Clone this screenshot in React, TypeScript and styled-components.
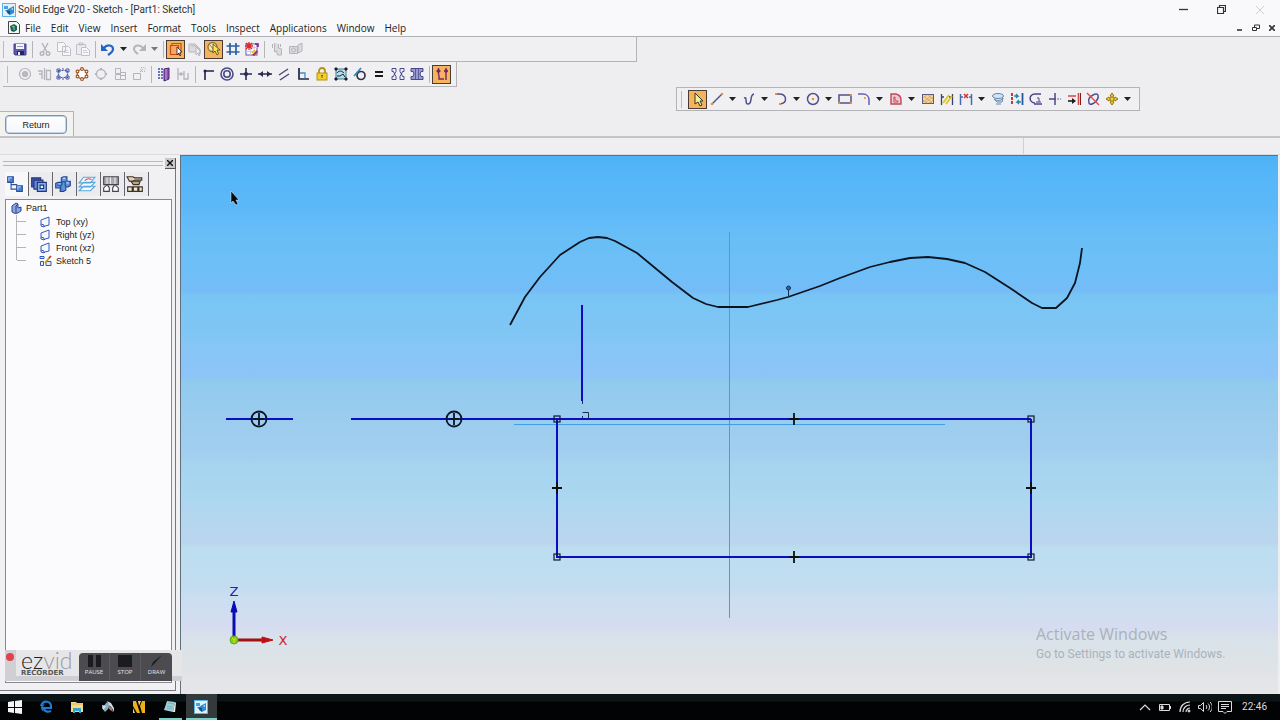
import React from "react";
import styled, { createGlobalStyle } from "styled-components";

const GlobalStyle = createGlobalStyle`
  * { box-sizing: border-box; }
  html, body { margin: 0; padding: 0; }
  body { background: #eeeef1; font-family: "Noto Sans", "Liberation Sans", sans-serif; color: #222; }
  button { font: inherit; color: inherit; }
`;

/* ---------- icons ---------- */

const GRAY = "#b4b4ba";
const ORANGE = "#e8903a";

const toolIcons: Record<string, React.ReactNode> = {
  save: (
    <g>
      <path d="M2 3h12v11H3l-1-1z" fill="#5a5ab0" stroke="#44448c" />
      <rect x="4" y="3" width="8" height="5" fill="#f4f4fa" />
      <path d="M5 5.500h6" stroke="#9a9ac8" />
      <rect x="5" y="10" width="7" height="4" fill="#26265c" />
      <rect x="6" y="11" width="2" height="3" fill="#eee" />
    </g>
  ),
  cut: (
    <g fill="none" stroke={GRAY} strokeWidth="1.4">
      <path d="M5 2l5 9M11 2L6 11" />
      <circle cx="5" cy="12.5" r="1.8" />
      <circle cx="11" cy="12.5" r="1.8" />
    </g>
  ),
  copy: (
    <g fill="#f6f6f8" stroke="#c0c0c8">
      <path d="M1.500 1.500h6l2 2v7h-8zM6.500 5.500h6l2 2v7h-8z" />
      <path d="M8 9.500h4M8 11.500h5" stroke="#ccccdd" />
    </g>
  ),
  paste: (
    <g fill="#ececf0" stroke="#c0c0c8">
      <path d="M1.500 3.500h9v10h-9zM4 2h4v2H4z" />
      <path d="M6.500 6.500h5l3 3v5h-8z" fill="#f8f8fa" />
      <path d="M8 9.500h4M8 11.500h5" stroke="#ccccdd" />
    </g>
  ),
  undo: (
    <g fill="none" stroke="#2563c4" strokeWidth="2.200">
      <path d="M4 7c3-4 9-3 9 1 0 3-2 4-5 6" />
      <path d="M1 3v7h7z" fill="#2563c4" stroke="none" />
    </g>
  ),
  redo: (
    <g fill="none" stroke={GRAY} strokeWidth="2">
      <path d="M12 7c-3-4-9-3-9 1 0 3 2 3 4 5" />
      <path d="M15 3v7H8z" fill={GRAY} stroke="none" />
    </g>
  ),
  part: (
    <g>
      <path d="M2.500 4.500h8v9h-8z" fill="#f4a860" stroke="#c84820" strokeWidth="1.200" />
      <path d="M4 4V2.500h9V10" fill="none" stroke="#c84820" strokeWidth="1.200" />
      <path d="M9 6v8l2-2 1 3 1-1-1-3h2z" fill="#fff" stroke="#222" strokeWidth=".8" />
    </g>
  ),
  partGray: (
    <g fill="#dcdce0" stroke={GRAY}>
      <path d="M2 3h6l3 3v5H2zM4 5h6l3 3v5" />
      <path d="M9 6v8l2-2 1 3 1-1-1-3h2z" fill="#f4f4f6" />
    </g>
  ),
  selectTool: (
    <g>
      <circle cx="6.500" cy="6" r="4.500" fill="#f8e8a0" stroke="#8a7440" strokeWidth="1.300" />
      <path d="M3 3l6 7" stroke="#e06030" />
      <path d="M7 3v9l2-2 2 4 1.500-1L11 9h3z" fill="#f6e94a" stroke="#444" strokeWidth=".8" />
    </g>
  ),
  grid: <path d="M5 2v12M11 2v12M1.500 5h13M1.500 11h13" stroke="#2a5fa8" strokeWidth="1.700" />,
  sheet: (
    <g>
      <rect x="2" y="3" width="11" height="11" fill="#fff" stroke="#7070c0" strokeWidth="1.200" />
      <path d="M2 6.500h11M6.500 3v11M10 3v11M2 10.500h11" stroke="#c8c8ea" />
      <path d="M2 2l6 6M8 2L2 8M1 5h8M5 1v8" stroke="#e02828" strokeWidth="1.300" />
      <path d="M11 3h3v3" stroke="#7a2090" strokeWidth="1.600" fill="none" />
      <path d="M8 14l5-5 1 2-4 4z" fill="#b03050" />
      <path d="M8 12l3-3" stroke="#e8c020" strokeWidth="1.600" />
    </g>
  ),
  touch: (
    <path d="M5.500 2v9l2-1 1 4h4V8l-3-1V3M3.500 3v4M11.500 3v3" fill="#dcdce0" stroke={GRAY} />
  ),
  camera: (
    <g fill="#dcdce0" stroke={GRAY}>
      <path d="M1.500 5.500h8v7h-8zM10 4l4-2v8l-4 2z" />
      <circle cx="5.500" cy="9" r="2" />
    </g>
  ),
  target: (
    <g fill="none" stroke={GRAY} strokeWidth="1.200">
      <circle cx="8" cy="8" r="5.500" />
      <circle cx="8" cy="8" r="2.500" fill="#bbb" />
    </g>
  ),
  mirrorGray: (
    <path d="M2 5h4v3H3M6 5v8M8.500 2v12M10.500 4.500h4v9h-4z" fill="none" stroke={GRAY} strokeWidth="1.300" />
  ),
  pattern: (
    <g fill="none" stroke="#4858a8" strokeWidth="1.200">
      <path d="M3.500 4.500h9v7h-9z" strokeDasharray="2 1" />
      <path d="M2 3h3v3H2zM11 3h3v3h-3zM2 10h3v3H2zM11 10h3v3h-3zM7 3h2M7 13h2" strokeWidth="1" />
    </g>
  ),
  circlePattern: (
    <g fill="#fff" stroke="#9a5020" strokeWidth="1.100">
      <circle cx="8" cy="8" r="4.800" />
      <circle cx="8" cy="3" r="1.400" />
      <circle cx="8" cy="13" r="1.400" />
      <circle cx="3.500" cy="5.500" r="1.400" />
      <circle cx="12.500" cy="5.500" r="1.400" />
      <circle cx="3.500" cy="10.500" r="1.400" />
      <circle cx="12.500" cy="10.500" r="1.400" />
    </g>
  ),
  diamond: (
    <g fill="none" stroke={GRAY} strokeWidth="1.300">
      <circle cx="8" cy="8" r="4.500" />
      <path d="M8 2v2M8 12v2M2 8h2M12 8h2" strokeWidth="2" />
    </g>
  ),
  blocks: (
    <path d="M3.500 2.500h5v5h-5zM3.500 8.500h5v5h-5zM8.500 6.500h5v7h-5zM8.500 9.500h5" fill="none" stroke={GRAY} />
  ),
  scale: (
    <g fill="none" stroke={GRAY}>
      <path d="M2.500 7.500h7v6h-7zM9 6l3-3" />
      <rect x="10" y="1.500" width="4" height="4" strokeDasharray="1 1" />
    </g>
  ),
  book: (
    <g>
      <path d="M2 3h5M2 6h5M2 9h5M2 12h5M3 2v12M6 2v12" stroke="#3a4ab0" strokeDasharray="2 1" />
      <path d="M8 3l5-1v11l-5 2z" fill="#8c4faa" stroke="#4a2470" />
      <path d="M10 3v11" stroke="#c8a0e0" />
    </g>
  ),
  tree: <path d="M3 2v12M3 8h6M9 5v8h4V7M6 6v4" fill="none" stroke={GRAY} strokeWidth="1.300" />,
  connect: (
    <g>
      <path d="M5 14V5h9" fill="none" stroke="#222246" strokeWidth="1.600" />
      <circle cx="5" cy="5" r="1.500" fill="#222246" />
    </g>
  ),
  concentric: (
    <g fill="none" stroke="#4a4a86" strokeWidth="1.600">
      <circle cx="8" cy="8" r="6" />
      <circle cx="8" cy="8" r="3.200" />
    </g>
  ),
  plus: (
    <g>
      <path d="M8 2v12M2 8h12" stroke="#2a2a50" strokeWidth="1.600" />
      <circle cx="8" cy="8" r="2" fill="#2a2a50" />
    </g>
  ),
  horizontal: (
    <g fill="#2a2a50">
      <path d="M1 8h14" stroke="#2a2a50" strokeWidth="1.500" />
      <path d="M2 8l4-3v6zM14 8l-4-3v6z" />
    </g>
  ),
  parallel: <path d="M3 9l9-6M4 14l9-6" stroke="#4a4a7c" strokeWidth="1.500" />,
  perpendicular: (
    <g fill="none">
      <path d="M4 2v11h10" stroke="#23234c" strokeWidth="1.700" />
      <path d="M5 7h5v5" stroke="#3f8fc0" strokeWidth="1.300" />
    </g>
  ),
  lock: (
    <g>
      <path d="M5 8V5a3 3 0 016 0v3" fill="none" stroke="#b89010" strokeWidth="1.800" />
      <rect x="3" y="7" width="10" height="7" fill="#f2cf2a" stroke="#b89010" />
      <path d="M8 9v3M7 9.500h2" stroke="#7a5c08" />
    </g>
  ),
  rigid: (
    <g>
      <rect x="3" y="3" width="10" height="10" fill="#b8dcec" stroke="#3a8090" />
      <path d="M4 7c2-3 5-2 7 0M4 10h3l3-2 2 3" fill="none" stroke="#222" />
      <path d="M2 2h2v2H2zM12 2h2v2h-2zM2 12h2v2H2zM12 12h2v2h-2z" fill="#1c1c2c" stroke="#1c1c2c" />
    </g>
  ),
  tangent: (
    <g fill="none">
      <circle cx="9" cy="9.500" r="4" stroke="#333348" strokeWidth="1.700" />
      <path d="M2 10L9 2" stroke="#2f88b8" strokeWidth="1.700" />
    </g>
  ),
  equal: <path d="M4 6h8M4 10h8" stroke="#1a1a1a" strokeWidth="2" />,
  symmetric: (
    <path
      d="M2 2.500h4v3L4.500 8 6 10.500v3H2v-3h1.500l1-2.500-1-2.500H2zM14 2.500h-4v3L11.500 8 10 10.500v3h4v-3h-1.500l-1-2.500 1-2.500H14z"
      fill="#f0f0fc"
      stroke="#48488a"
    />
  ),
  symmetricFill: (
    <g>
      <path d="M2 2.500h12v3h-2L11 8l1 2.500h2v3H2v-3h2L5 8 4 5.500H2z" fill="#9a9ad0" stroke="#48488a" />
      <path d="M6.500 3v10M9.500 3v10" stroke="#5c5ca0" />
    </g>
  ),
  relations: (
    <g stroke="#7a2468" strokeWidth="1.400" fill="none">
      <path d="M4.500 2v7M12 2v12M2.500 5h4M10 5h4M5 9v4h5" />
      <circle cx="4.500" cy="5" r="1" />
      <circle cx="12" cy="5" r="1" />
    </g>
  ),
  pointer: <path d="M5 2v11l3-2 2 4 2-1-2-4h3z" fill="#f6ef90" stroke="#333" />,
  line: (
    <g>
      <path d="M3 13L13 3" stroke="#50508e" strokeWidth="1.400" />
      <circle cx="3" cy="13" r="1.300" fill={ORANGE} />
      <circle cx="13" cy="3" r="1.300" fill={ORANGE} />
    </g>
  ),
  curve: (
    <path d="M3 7c4-2 0 6 4 6 5 0 1-9 6-10" fill="none" stroke="#50508e" strokeWidth="1.500" />
  ),
  arc: (
    <g fill="none">
      <path d="M3 3h3c8 0 9 9 1 10" stroke="#50508e" strokeWidth="1.500" />
      <path d="M2 3h2M6 13h2" stroke={ORANGE} strokeWidth="1.800" />
    </g>
  ),
  circle: (
    <g>
      <circle cx="8" cy="8" r="5.500" fill="none" stroke="#50508e" strokeWidth="1.500" />
      <circle cx="8" cy="8" r="1.300" fill={ORANGE} />
    </g>
  ),
  rectangle: (
    <g>
      <rect x="2" y="4" width="12" height="8" fill="none" stroke="#50508e" strokeWidth="1.500" />
      <path d="M13 3h2v2h-2zM1 11h2v2H1zM13 11h2v2h-2z" fill={ORANGE} />
    </g>
  ),
  fillet: (
    <g fill="none">
      <path d="M2 3h5c4 0 6 3 6 6v5" stroke="#6060b8" strokeWidth="1.500" />
      <path d="M8 7h1v1" stroke={ORANGE} strokeWidth="1.500" />
    </g>
  ),
  offset: (
    <g fill="none" stroke="#c0485a">
      <path d="M3 3h5c4 1 5 3 5 6v4H3z" fill="#f0c8cc" strokeWidth="1.400" />
      <path d="M6 6h1v3c1 1 2 1 3 1v1H6z" fill="#fff" />
    </g>
  ),
  fill: (
    <g>
      <rect x="2.500" y="3.500" width="11" height="9" fill="#f4d8a4" stroke="#5a5a80" />
      <path d="M3 7l4-3M3 11l9-7M5 12l8-6M9 12l4-3M3 9l4 3M4 5l8 7M8 4l5 4" stroke="#e0a868" />
    </g>
  ),
  trim: (
    <g>
      <path d="M2.500 3v11M13.500 3v11M2 6h3M10 6h4" stroke="#3c3c78" strokeWidth="1.300" />
      <path d="M4 12L10 4M7 13l6-8" stroke="#dcc81c" strokeWidth="1.800" />
    </g>
  ),
  split: (
    <g>
      <path d="M2.500 3v11M13.500 3v11M3 6h2M11 6h2" stroke="#4868b0" strokeWidth="1.500" />
      <path d="M6 3l4 4M10 3L6 7" stroke="#d83030" strokeWidth="1.600" />
    </g>
  ),
  wrap: (
    <g fill="#d0e4f4" stroke="#6484b0">
      <ellipse cx="8" cy="5" rx="5.500" ry="2.500" />
      <path d="M4 8c3 2 7 2 9-1l-1 4H7zM6 13h5" />
    </g>
  ),
  convert: (
    <g fill="none">
      <path d="M3 2v12" stroke="#c83838" strokeWidth="2" strokeDasharray="3 1" />
      <path d="M13.500 2v12" stroke="#2458a4" strokeWidth="1.800" />
      <path d="M5 5h4l-2-2M12 11H8l2-2M8 11l2 2M9 5L7 7" stroke="#3080a8" strokeWidth="1.300" />
    </g>
  ),
  smart: (
    <g fill="none" stroke="#50408a" strokeWidth="1.500">
      <path d="M13 3H7C0 3 1 12 7 12M6 13h8" />
      <path d="M9 7h2v4M8 11h5" strokeWidth="1" />
    </g>
  ),
  crosshair: (
    <g stroke="#4a4a88" strokeWidth="1.500">
      <path d="M8 2v12M2 8h7" />
      <path d="M10 8h4" strokeDasharray="2 1" stroke="#9090c0" />
    </g>
  ),
  extend: (
    <g>
      <path d="M2 5h8M12.500 2v12" stroke="#d84848" strokeWidth="1.600" />
      <path d="M14.500 2v12" stroke="#7a1c1c" />
      <path d="M2 10h4" stroke="#1c1c1c" strokeWidth="1.600" />
      <path d="M6 7l4 3-4 3z" fill="#1c1c1c" />
    </g>
  ),
  noEllipse: (
    <g fill="none">
      <path d="M8 4c6-3 6 2 4 5s-7 6-8 3 0-6 4-8z" stroke="#50508e" strokeWidth="1.500" />
      <path d="M2 2l12 12" stroke="#e05050" strokeWidth="1.400" />
    </g>
  ),
  move: (
    <path
      d="M8 2l2 3H9v2h2V6l3 2-3 2V9H9v2h1l-2 3-2-3h1V9H5v1L2 8l3-2v1h2V5H6z"
      fill="#f0cc30"
      stroke="#907010"
    />
  ),
};

const Glyph = ({ name }: { name: string }) => (
  <svg width="16" height="16" viewBox="0 0 16 16" aria-hidden="true">
    {toolIcons[name]}
  </svg>
);

/* ---------- window frame ---------- */

const Page = styled.div`
  display: flex;
  flex-direction: column;
  min-height: 100vh;
`;

const TitleBar = styled.header`
  display: flex;
  align-items: center;
  height: 19px;
  padding-left: 2px;
  background: #f9f9fb;
  color: #333;
`;

const TitleText = styled.h1`
  flex: 1;
  margin: 0 0 0 2px;
  font-family: Roboto, sans-serif;
  font-size: 10px;
  font-weight: 400;
  line-height: 18px;
`;

const FrameButton = styled.button<{ $width: number; $faded?: boolean }>`
  display: flex;
  align-items: center;
  justify-content: center;
  width: ${(p) => p.$width}px;
  height: 16px;
  padding: 0;
  border: 0;
  background: transparent;
  color: ${(p) => (p.$faded ? "#cfcfd4" : "#333")};
`;

const MenuBar = styled.nav`
  display: flex;
  align-items: center;
  height: 18px;
  padding-left: 7px;
  border-bottom: 1px solid #b0b0b4;
  background: #f9f9fb;
`;

const MenuItem = styled.button`
  padding: 0 5px;
  border: 0;
  background: transparent;
  font-family: "Open Sans", sans-serif;
  font-size: 10px;
  line-height: 16px;
`;

const Spacer = styled.div`
  flex: 1;
`;

/* ---------- toolbars ---------- */

const Docks = styled.div`
  display: flex;
  flex-direction: column;
  align-items: flex-start;
  border-bottom: 2px solid #c4c4c8;
`;

const Toolbar = styled.div<{ $minWidth?: number; $indent?: number; $framed?: boolean }>`
  display: flex;
  align-items: center;
  height: ${(p) => (p.$framed ? 24 : 25)}px;
  min-width: ${(p) => p.$minWidth ?? 0}px;
  margin-left: ${(p) => p.$indent ?? 0}px;
  padding-right: 5px;
  border: solid #b4b4b8;
  border-width: ${(p) => (p.$framed ? "1px" : "0 1px 1px 0")};
  background: #f0f0f3;
`;

const Grip = styled.span<{ $before: number; $after: number }>`
  width: 3px;
  height: 17px;
  margin: 0 ${(p) => p.$after}px 0 ${(p) => p.$before}px;
  border-right: 1px solid #bcbcc0;
`;

const ToolButton = styled.button<{ $on?: boolean }>`
  display: flex;
  align-items: center;
  justify-content: center;
  width: 19px;
  height: 19px;
  padding: 0;
  border: 1px solid ${(p) => (p.$on ? "#4a3c34" : "transparent")};
  background: ${(p) => (p.$on ? "#f5b45c" : "transparent")};
  svg { flex: none; }
`;

const ArrowButton = styled.button<{ $wide?: boolean; $faded?: boolean }>`
  display: flex;
  align-items: center;
  justify-content: center;
  width: ${(p) => (p.$wide ? 13 : 12)}px;
  height: 19px;
  padding: 0;
  border: 0;
  background: transparent;
  color: ${(p) => (p.$faded ? "#77777c" : "#222")};
`;

const Separator = styled.span`
  width: 1px;
  height: 17px;
  margin: 0 2px 0 3px;
  background: #b4b4ba;
`;

const ReturnBar = styled.div`
  display: flex;
  align-items: center;
  height: 25px;
  padding: 1px 6px 0 5px;
  border: solid #b4b4b8;
  border-width: 1px 1px 0 0;
  background: #f2f2ee;
`;

const ReturnButton = styled.button`
  width: 62px;
  height: 19px;
  padding: 0;
  border: 1px solid #7f93ab;
  border-radius: 4px;
  background: linear-gradient(#ffffff, #f4f6fa);
  box-shadow: inset 0 0 0 1px #c3d4ea;
  font-family: "Liberation Sans", sans-serif;
  font-size: 9px;
  line-height: 16px;
  color: #222;
`;

const PromptBar = styled.div`
  display: flex;
  height: 17px;
  border-bottom: 1px solid #dcdce0;
  background: #efeff1;
`;

const PromptText = styled.div`
  flex: 4;
  border-right: 1px solid #d0d0d4;
`;

const PromptStatus = styled.div`
  flex: 1;
`;

/* "|" separates groups, "v" is a drop-down arrow ("-v" a disabled one), a leading "*" marks a pressed tool. */
const standardTools = ["save", "|", "cut", "copy", "paste", "|", "undo", "v", "redo", "-v", "|", "*part", "partGray", "*selectTool", "grid", "sheet", "|", "touch", "camera"];
const relationTools = ["target", "mirrorGray", "pattern", "circlePattern", "diamond", "blocks", "scale", "|", "book", "tree", "|", "connect", "concentric", "plus", "horizontal", "parallel", "perpendicular", "lock", "rigid", "tangent", "equal", "symmetric", "symmetricFill", "|", "*relations"];
const drawTools = ["*pointer", "line", "v", "curve", "v", "arc", "v", "circle", "v", "rectangle", "fillet", "v", "offset", "v", "fill", "trim", "split", "v", "wrap", "convert", "smart", "crosshair", "extend", "noEllipse", "move", "v"];

const Tools = ({ items, wide }: { items: string[]; wide?: boolean }) => (
  <>
    {items.map((item, i) => {
      if (item === "|") return <Separator key={i} />;
      if (item === "v" || item === "-v")
        return (
          <ArrowButton key={i} $wide={wide} $faded={item === "-v"} aria-label="More">
            <svg width="7" height="4" viewBox="0 0 7 4">
              <path d="M0 0h7L3.500 4z" fill="currentColor" />
            </svg>
          </ArrowButton>
        );
      const on = item.startsWith("*");
      const name = on ? item.slice(1) : item;
      return (
        <ToolButton key={i} $on={on} aria-label={name}>
          <Glyph name={name} />
        </ToolButton>
      );
    })}
  </>
);

/* ---------- work area ---------- */

const Workspace = styled.main`
  display: flex;
  flex: 1;
  min-height: 0;
`;

const SidePanel = styled.aside`
  display: flex;
  flex-direction: column;
  flex: none;
  width: 180px;
  padding: 2px 4px 3px 0;
  background: #f1f1f4;
`;

const PanelHeader = styled.div`
  display: flex;
  align-items: center;
  gap: 2px;
  height: 12px;
  padding-left: 3px;
`;

const PanelGrip = styled.div`
  flex: 1;
  height: 5px;
  border: solid #b8b8bc;
  border-width: 1px 0;
`;

const PanelClose = styled.button`
  display: flex;
  align-items: center;
  justify-content: center;
  width: 11px;
  height: 11px;
  padding: 0;
  border: 1px solid #555;
  border-width: 0 1px 1px 0;
  background: #c8c8cc;
`;

const PanelFrame = styled.div`
  position: relative;
  display: flex;
  flex-direction: column;
  flex: 1;
  padding: 3px 3px 7px 5px;
  border: solid #77777c;
  border-width: 0 1px 1px 0;
`;

const Tabs = styled.div`
  display: flex;
  height: 24px;
`;

const Tab = styled.button<{ $active?: boolean }>`
  display: flex;
  align-items: center;
  justify-content: center;
  width: 24px;
  padding: 0 3px 0 0;
  border: 0;
  border-right: 1px solid #66666c;
  background: ${(p) => (p.$active ? "#f8f8fa" : "#ececf0")};
  svg { flex: none; }
`;

const TreeBox = styled.div`
  flex: 1;
  margin-top: 3px;
  padding: 1px 0 0 5px;
  border: 1px solid #88888e;
  background: #fbfbfd;
`;

const Tree = styled.ul`
  margin: 0;
  padding: 0;
  list-style: none;
  font-family: "Liberation Sans", sans-serif;
  font-size: 9px;
`;

const Node = styled.li`
  display: flex;
  align-items: center;
  gap: 4px;
  height: 14px;
`;

const Children = styled(Tree)`
  margin-left: 5px;
`;

const Leaf = styled.li`
  display: flex;
  align-items: center;
  gap: 4px;
  height: 13px;
  border-left: 1px solid #b4b4b8;
  &:last-child { border-image: linear-gradient(#b4b4b8 50%, transparent 50%) 1; }
  &::before {
    content: "";
    width: 9px;
    margin-right: 9px;
    border-top: 1px solid #b4b4b8;
  }
`;

const Canvas = styled.section`
  position: relative;
  flex: 1;
  margin-right: 2px;
  border: solid #60707c;
  border-width: 1px 0 0 1px;
  overflow: hidden;
  background: linear-gradient(
    #4db2f6 0%, #56b7f8 4%, #5cb7f8 9%, #62bbfa 12%,
    #68bef6 15%, #6fbff7 22%, #75bcf7 25%, #78c5f5 26%, #80c6f4 33%,
    #86c6f6 35%, #8dc4f7 41%, #90cbee 42%, #9bccee 49%, #a3cff0 56%, #a5d4ef 57%,
    #acd7f0 64%, #b3d6f0 66%, #bad6ee 72%, #bcdef0 73%, #c3dcf0 80%, #cbdef1 82%,
    #d0def0 85%, #d7dcef 88%, #d9e3ea 90%, #dfe3e6 95%, #e6e6e8 100%
  );
`;

const Drawing = styled.svg`
  position: absolute;
  inset: 0;
  width: 100%;
  height: 100%;
`;

const Watermark = styled.div`
  position: absolute;
  right: 24px;
  bottom: 30px;
  width: 218px;
  color: #a9b2bc;
  font-family: "Open Sans", sans-serif;
  font-size: 16px;
  line-height: 20px;
`;

const WatermarkHint = styled.div`
  font-family: Roboto, sans-serif;
  font-size: 12px;
`;

const spline =
  "329,169 344,141 359,121 379,99 399,86 408,82 417,81 426,82 434,85 456,97 491,126 512,142 525,148 537,151 567,151 596,144 607,141 639,130 659,122 689,111 709,106 729,102 747,101 766,103 784,107 804,116 829,132 851,147 861,152 875,152 886,142 894,127 899,107 901,92";

const corners = [[376, 263], [850, 263], [376, 401], [850, 401]];
const midpoints = [[613, 263], [376, 332], [850, 332], [613, 401]];
const circles = [[78, 263], [273, 263]];

const SketchDrawing = () => (
  <Drawing role="img" aria-label="Sketch 5" fill="none">
    <path d="M548.500 76v386M333 268.500h431" stroke="#3fa0ea" />
    <polyline points={spline} stroke="#0c1420" strokeWidth="1.800" strokeLinejoin="round" />
    <path d="M607.500 141v-7" stroke="#123050" />
    <circle cx="607.500" cy="132" r="2" fill="#2c6a9c" stroke="#123050" />
    <path d="M45 263h67M170 263h680" stroke="#0c0cc0" strokeWidth="2" />
    <path d="M376 263v138h474V263M401 149v96" stroke="#0c0cc0" strokeWidth="2" />
    <path d="M401.500 245v3M401.500 262v-2M401.500 256.500h6v6" stroke="#20304c" />
    {corners.map(([x, y], i) => (
      <rect key={i} x={x - 3} y={y - 3} width="6" height="6" stroke="#101830" strokeWidth="1.200" />
    ))}
    {midpoints.map(([x, y], i) => (
      <path key={i} d={`M${x - 5} ${y}h10M${x} ${y - 6}v12`} stroke="#101010" strokeWidth="1.800" />
    ))}
    {circles.map(([x, y], i) => (
      <g key={i} stroke="#0c1428" strokeWidth="1.800">
        <circle cx={x} cy={y} r="7.500" />
        <path d={`M${x - 5} ${y}h10M${x} ${y - 6}v12`} />
      </g>
    ))}
    <path d="M53 482v-32" stroke="#0c0cb4" strokeWidth="3" />
    <path d="M53 445l3 11h-6z" fill="#0c0cb4" stroke="#0c0cb4" />
    <path d="M56 484h26" stroke="#a01014" strokeWidth="3" />
    <path d="M92 484l-11-3v6z" fill="#c01014" stroke="#c01014" />
    <circle cx="53" cy="484" r="4" fill="#7cd020" stroke="#5cae18" />
    <path d="M51 482l2 2 2-2M53 484v3" stroke="#e8d820" />
    <g fontFamily="DejaVu Sans, sans-serif" fontSize="13" textAnchor="middle">
      <text x="53" y="440" fill="#2020b8">Z</text>
      <text x="102" y="489" fill="#d02028">X</text>
    </g>
    <path d="M50 35v12l2-2 3 4 2-1-2-4h3z" fill="#0a0a0a" stroke="#dceefa" strokeWidth=".5" />
  </Drawing>
);

/* ---------- recorder ---------- */

const Recorder = styled.div`
  position: absolute;
  left: 5px;
  bottom: 9px;
  z-index: 1;
  display: flex;
  width: 177px;
  height: 31px;
  background: linear-gradient(#e6e6e9 84%, #cfcfd3 84%);
`;

const RecordLight = styled.div`
  width: 11px;
  padding: 3px 0 0 1px;
  background: #d0d0d4;
  &::before {
    content: "";
    display: block;
    width: 8px;
    height: 8px;
    border-radius: 50%;
    background: #e0424c;
  }
`;

const Brand = styled.div`
  width: 63px;
  padding-left: 5px;
  color: #222;
`;

const BrandName = styled.div`
  font-family: Lato, sans-serif;
  font-size: 23px;
  font-weight: 300;
  line-height: 20px;
  span { color: #99999e; }
`;

const BrandSub = styled.div`
  font-family: "DejaVu Sans", sans-serif;
  font-size: 7px;
  font-weight: 700;
  line-height: 6px;
  color: #555;
`;

const RecorderKeys = styled.div`
  display: flex;
  align-self: flex-start;
  height: 28px;
  margin-top: 3px;
  border-radius: 4px 4px 0 0;
  overflow: hidden;
  background: #4c4c50;
`;

const RecorderKey = styled.button`
  display: flex;
  flex-direction: column;
  align-items: center;
  width: 31px;
  padding: 1px 0 0;
  border: 0;
  border-right: 1px solid #5c5c60;
  background: transparent;
  font-family: "Open Sans", sans-serif;
  font-size: 6px;
  line-height: 9px;
  color: #e4e4e6;
  &:last-child { border-right: 0; }
`;

/* ---------- taskbar ---------- */

const Taskbar = styled.footer`
  display: flex;
  align-items: stretch;
  height: 26px;
  background: linear-gradient(#0b1416 0 7px, #020304 8px);
`;

const TaskButton = styled.button<{ $state?: "open" | "active" }>`
  display: flex;
  align-items: center;
  justify-content: center;
  width: ${(p) => (p.$state === "open" ? 23 : 31)}px;
  margin: 0 ${(p) => (p.$state === "open" ? 4 : 0)}px;
  padding: 2px 2px 0 0;
  border: 0;
  border-bottom: 2px solid ${(p) => (p.$state ? "#78cfc4" : "transparent")};
  background: ${(p) => (p.$state === "active" ? "#34393c" : "transparent")};
`;

const Tray = styled.div`
  display: flex;
  align-items: center;
  margin-left: auto;
  padding-right: 13px;
  color: #dcdcdf;
`;

const TrayButton = styled.button`
  display: flex;
  align-items: center;
  justify-content: center;
  width: 20px;
  padding: 0;
  border: 0;
  background: transparent;
`;

const Clock = styled.time`
  margin-left: 7px;
  font-family: Roboto, sans-serif;
  font-size: 10px;
  line-height: 24px;
`;

const TaskIcon = ({ children }: { children: React.ReactNode }) => (
  <svg width="14" height="14" viewBox="0 0 14 14" aria-hidden="true">{children}</svg>
);

const TrayIcon = ({ children }: { children: React.ReactNode }) => (
  <svg width="14" height="14" viewBox="0 0 14 14" fill="none" stroke="currentColor" aria-hidden="true">{children}</svg>
);

const AppLogo = () => (
  <g>
    <rect x=".5" y=".5" width="13" height="13" fill="#dff1fb" stroke="#5cb4e4" />
    <path d="M2 3h4v3H2z" fill="#4ca0dc" />
    <path d="M8 5l4-2v7l-4 2-3-2V7z" fill="#2f8cd0" />
    <path d="M3 7l5 1v4z" fill="#174c8c" />
    <path d="M9 6l2-1v2z" fill="#cfeafa" />
  </g>
);

const PlaneIcon = () => (
  <svg width="13" height="12" viewBox="0 0 13 12">
    <path d="M2 4l8-3v8l-4 1-1 1-3-1z" fill="#f4f8ff" stroke="#3458b8" />
    <path d="M2 8l3 1v2" fill="none" stroke="#3458b8" />
  </svg>
);

const SketchIcon = () => (
  <svg width="13" height="12" viewBox="0 0 13 12">
    <path d="M1 1.500h4v2H1zM1.500 6.500h3v4h-3zM7 6.500h5v4H7z" fill="#e4ecfc" stroke="#3458b8" />
    <path d="M6 8l5-6" stroke="#c89a20" strokeWidth="1.800" />
    <path d="M10 3l2-2" stroke="#c03030" strokeWidth="1.600" />
  </svg>
);

const panelTabs: { name: string; icon: React.ReactNode }[] = [
  {
    name: "EdgeBar",
    icon: (
      <g fill="#4c80d8" stroke="#2c509c">
        <path d="M4.500 6v6.500h5M10 8.500H5" fill="none" />
        <path d="M1.500 1.500h5v5h-5zM9.500 9.500h5v5h-5z" />
        <path d="M2.500 5V2.500H5M10.500 13v-2.500H13" fill="none" stroke="#a8c8f4" />
      </g>
    ),
  },
  {
    name: "Library",
    icon: (
      <g fill="#3c5cb8" stroke="#24347c">
        <path d="M1.500 2.500h8v8h-8z" />
        <path d="M3.500 4.500h8v8h-8z" fill="#6c8cd8" />
        <path d="M6.500 6.500h8v8h-8z" fill="#80b0e8" />
        <path d="M9 9h3v3H9z" fill="#f4f8ff" />
      </g>
    ),
  },
  {
    name: "Family of Parts",
    icon: (
      <g fill="#5c94e0" stroke="#24488c">
        <path d="M6.500 2.500l2-1h3v4h3v4l-2 1h-2v3l-2 1h-3v-3h-4v-4l2-1h3z" />
        <path d="M7 6h3v4M3 9h3v4M7 6v3" fill="none" stroke="#24488c" />
        <path d="M8 3h2M11 7h2M4 8h2" stroke="#c0dcfa" />
      </g>
    ),
  },
  {
    name: "Layers",
    icon: (
      <g fill="#f4faff" stroke="#58a8dc">
        <path d="M1 14l4-4h10l-4 4zM1 10.500l4-4h10l-4 4zM1 7l4-5h10l-4 5z" />
        <path d="M6 5c2-2 4-2 6-1" stroke="#d04848" fill="none" />
      </g>
    ),
  },
  {
    name: "Sensors",
    icon: (
      <g stroke="#44444a" fill="#d4d4d8">
        <path d="M1.500 1.500h13v7h-13z" fill="#a8a8ae" />
        <path d="M4.500 2v6M7.500 2v6M11.500 2v6" stroke="#e8e8ea" />
        <path d="M1.500 14.500v-3l2-2h2l1 2v3zM9.500 14.500v-3l1-2h2l2 2v3z" fill="#fff" />
      </g>
    ),
  },
  {
    name: "Playback",
    icon: (
      <g stroke="#3c3428" fill="#e8d4b0">
        <path d="M1 1.500h5l2 1h6v2H8l-2 1H3z" />
        <path d="M4.500 5.500h8l-1 3h-5z" fill="#b8a890" />
        <path d="M1.500 10.500h4v4h-4zM6.500 10.500h4v4h-4zM11.500 10.500h3v4h-3z" fill="#f4e8d0" />
      </g>
    ),
  },
];

const menus = ["File", "Edit", "View", "Insert", "Format", "Tools", "Inspect", "Applications", "Window", "Help"];
const planes = ["Top (xy)", "Right (yz)", "Front (xz)"];

export default function App() {
  return (
    <Page>
      <GlobalStyle />
      <TitleBar>
        <TaskIcon><AppLogo /></TaskIcon>
        <TitleText>Solid Edge V20 - Sketch - [Part1: Sketch]</TitleText>
        <FrameButton $width={37} aria-label="Minimize">
          <svg width="9" height="9"><path d="M0 4.500h9" stroke="currentColor" strokeWidth="1.300" /></svg>
        </FrameButton>
        <FrameButton $width={38} aria-label="Restore">
          <svg width="9" height="9" fill="none" stroke="currentColor">
            <path d="M.5 2.500h6v6h-6zM2.500 2V.5h6v6H7" strokeWidth="1.200" />
          </svg>
        </FrameButton>
        <FrameButton $width={40} $faded aria-label="Close">
          <svg width="8" height="8"><path d="M0 0l8 8M8 0L0 8" stroke="currentColor" /></svg>
        </FrameButton>
      </TitleBar>

      <MenuBar>
        <svg width="13" height="13" viewBox="0 0 13 13" aria-hidden="true">
          <path d="M1.500.5h8l3 3v9h-11z" fill="#f4f8f4" stroke="#444" />
          <path d="M3 5l4-2 3 2v4l-3 2-3-1z" fill="#1c6450" />
          <path d="M5 6l2-1v4" stroke="#8cd0b4" fill="none" />
        </svg>
        {menus.map((m) => <MenuItem key={m}>{m}</MenuItem>)}
        <Spacer />
        <FrameButton $width={16} aria-label="Minimize document">
          <svg width="6" height="8"><path d="M0 6h5" stroke="currentColor" strokeWidth="1.600" /></svg>
        </FrameButton>
        <FrameButton $width={16} aria-label="Restore document">
          <svg width="8" height="8" fill="none" stroke="currentColor"><path d="M.5 3.500h4v3h-4zM2.500 3V1h5v3.500H5" /></svg>
        </FrameButton>
        <FrameButton $width={16} aria-label="Close document">
          <svg width="6" height="6"><path d="M0 0l6 6M6 0L0 6" stroke="currentColor" strokeWidth="1.600" /></svg>
        </FrameButton>
      </MenuBar>

      <Docks>
        <Toolbar $minWidth={637} role="toolbar" aria-label="Main">
          <Grip $before={1} $after={6} />
          <Tools items={standardTools} />
        </Toolbar>
        <Toolbar $indent={3} role="toolbar" aria-label="Relationships">
          <Grip $before={2} $after={7} />
          <Tools items={relationTools} />
        </Toolbar>
        <Toolbar $indent={676} $framed role="toolbar" aria-label="Draw">
          <Grip $before={2} $after={6} />
          <Tools items={drawTools} wide />
        </Toolbar>
        <ReturnBar>
          <ReturnButton>Return</ReturnButton>
        </ReturnBar>
      </Docks>

      <PromptBar>
        <PromptText />
        <PromptStatus />
      </PromptBar>

      <Workspace>
        <SidePanel>
          <PanelHeader>
            <PanelGrip />
            <PanelClose aria-label="Close panel">
              <svg width="6" height="6"><path d="M0 0l6 6M6 0L0 6" stroke="#111" strokeWidth="1.400" /></svg>
            </PanelClose>
          </PanelHeader>
          <PanelFrame>
            <Tabs role="tablist">
              {panelTabs.map((t, i) => (
                <Tab key={t.name} role="tab" $active={i === 0} aria-selected={i === 0} aria-label={t.name}>
                  <svg width="18" height="18" viewBox="0 0 16 16">{t.icon}</svg>
                </Tab>
              ))}
            </Tabs>
            <TreeBox>
              <Tree>
                <Node>
                  <svg width="11" height="12" viewBox="0 0 11 12">
                    <path d="M1 4l4-3 2 1v4l3-1v4l-5 3-4-2z" fill="#88a8e4" stroke="#2c4490" />
                    <path d="M5 4v7M5 4l2-2" stroke="#2c4490" />
                  </svg>
                  Part1
                </Node>
                <li>
                  <Children>
                    {planes.map((p) => <Leaf key={p}><PlaneIcon />{p}</Leaf>)}
                    <Leaf><SketchIcon />Sketch 5</Leaf>
                  </Children>
                </li>
              </Tree>
            </TreeBox>
            <Recorder>
              <RecordLight />
              <Brand>
                <BrandName>ez<span>vid</span></BrandName>
                <BrandSub>RECORDER</BrandSub>
              </Brand>
              <RecorderKeys>
                <RecorderKey>
                  <svg width="13" height="14"><path d="M0 1h5v12H0zM8 1h5v12H8z" fill="#1c1c1f" /></svg>
                  PAUSE
                </RecorderKey>
                <RecorderKey>
                  <svg width="14" height="14"><path d="M0 1h14v12H0z" fill="#1c1c1f" /></svg>
                  STOP
                </RecorderKey>
                <RecorderKey>
                  <svg width="13" height="14"><path d="M12 1L5 9l-4 4 2-5z" fill="#1c1c1f" /></svg>
                  DRAW
                </RecorderKey>
              </RecorderKeys>
            </Recorder>
          </PanelFrame>
        </SidePanel>
        <Canvas>
          <SketchDrawing />
          <Watermark>
            Activate Windows
            <WatermarkHint>Go to Settings to activate Windows.</WatermarkHint>
          </Watermark>
        </Canvas>
      </Workspace>

      <Taskbar>
        <TaskButton aria-label="Start">
          <TaskIcon><path d="M0 2l6-1v6H0zM7 1l7-1v7H7zM0 8h6v5l-6-1zM7 8h7v6l-7-1z" fill="#f4f4f6" /></TaskIcon>
        </TaskButton>
        <TaskButton aria-label="Edge">
          <TaskIcon>
            <path d="M2 6c2-6 11-6 10 2H5c0 4 4 4 7 3" fill="none" stroke="#2479cc" strokeWidth="2.200" />
            <path d="M2 7c1-2 3-3 4-3-2 2-3 5-1 8-2-1-3-3-3-5z" fill="#2479cc" />
          </TaskIcon>
        </TaskButton>
        <TaskButton aria-label="File Explorer">
          <TaskIcon>
            <path d="M1 2h5l1 1h6v9H1z" fill="#f4dc88" />
            <path d="M3 8h8v5H9v-2H5v2H3z" fill="#38a4cc" />
            <path d="M1 4h12" stroke="#e0b850" />
          </TaskIcon>
        </TaskButton>
        <TaskButton aria-label="Modeler">
          <TaskIcon>
            <path d="M1 8l5-6 3 3-2 4-3 3z" fill="#8cacc4" />
            <path d="M6 1l4 2 3 5v4l-2-4-3-3z" fill="#c8dcec" />
            <path d="M8 6l3 2 1 4-4-3z" fill="#c07458" />
            <path d="M1 5l4 1-3 4z" fill="#e0e8ee" />
          </TaskIcon>
        </TaskButton>
        <TaskButton aria-label="Simulation">
          <TaskIcon>
            <path d="M1 1h3l4 12H5L1 6zM13 1h-3L8 6l2 7h3z" fill="#f0b018" />
            <path d="M1 13V8l2 5zM6 1h3L7 6z" fill="#f8d468" />
          </TaskIcon>
        </TaskButton>
        <TaskButton $state="open" aria-label="Notepad">
          <TaskIcon>
            <path d="M4 1l8 1-2 10-9-2z" fill="#9cd0d8" />
            <path d="M5 3l6 1M4 6l6 1M4 8l5 1" stroke="#74b0bc" />
            <path d="M10 12l2-10 1 1-1 9z" fill="#f0f0e8" />
          </TaskIcon>
        </TaskButton>
        <TaskButton $state="active" aria-label="Solid Edge">
          <TaskIcon><AppLogo /></TaskIcon>
        </TaskButton>
        <Tray>
          <TrayButton aria-label="Show hidden icons"><TrayIcon><path d="M2 10l5-5 5 5" strokeWidth="1.200" /></TrayIcon></TrayButton>
          <TrayButton aria-label="Battery">
            <TrayIcon><path d="M1.500 4.500h10v6h-10zM12.500 6v3" /><path d="M3 6h2v3H3z" fill="currentColor" /></TrayIcon>
          </TrayButton>
          <TrayButton aria-label="Network">
            <TrayIcon>
              <path d="M2 12C2 6 6 2 12 2M5 12c0-4 3-7 7-7M8 12c0-2 2-4 4-4" strokeWidth="1.200" />
              <circle cx="11" cy="11" r="1" fill="currentColor" />
            </TrayIcon>
          </TrayButton>
          <TrayButton aria-label="Volume">
            <TrayIcon><path d="M.5 5.500h2l3-3v9l-3-3h-2zM8 5c1 1 1 3 0 4M10 3.500c2 2 2 5 0 7M12 2c3 3 3 7 0 10" /></TrayIcon>
          </TrayButton>
          <TrayButton aria-label="Notifications">
            <TrayIcon><path d="M.5 1.500h13v10H9l-2 2-2-2H.500zM3 4.500h8M3 6.500h8M3 8.500h5" /></TrayIcon>
          </TrayButton>
          <Clock>22:46</Clock>
        </Tray>
      </Taskbar>
    </Page>
  );
}
